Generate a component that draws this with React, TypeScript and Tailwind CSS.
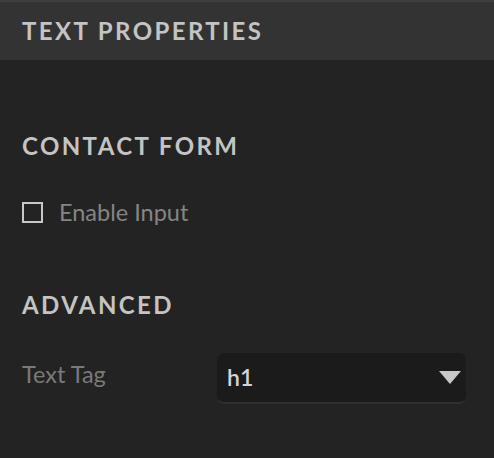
export default function App() {
  return (
    <div className="w-[494px] h-[458px] bg-[#232323] overflow-hidden" style={{ fontFamily: "Lato, 'Noto Sans', sans-serif" }}>
      <div className="h-[60px] bg-[#333333] border-t-2 border-[#3e3e3e] flex items-center px-[22px]">
        <h2 className="text-[24px] font-bold tracking-[0.1em] text-[#c4c4c4] leading-none">TEXT PROPERTIES</h2>
      </div>

      <div className="px-[22px]">
        <h3 className="mt-[74px] text-[24px] font-bold tracking-[0.1em] text-[#c4c4c4] leading-none">CONTACT FORM</h3>

        <label className="mt-[43px] flex items-center gap-4">
          <span className="w-[21px] h-[21px] border-2 border-[#c8c8c8]" />
          <span className="text-[23.5px] text-[#858585] leading-none">Enable Input</span>
        </label>

        <h3 className="mt-[68px] text-[24px] font-bold tracking-[0.1em] text-[#c4c4c4] leading-none">ADVANCED</h3>

        <div className="mt-[36px] flex items-center">
          <span className="w-[195px] mb-[6px] text-[23.5px] text-[#7a7a7a]">Text Tag</span>
          <div className="w-[249px] h-[51px] rounded-[7px] bg-[#1b1b1b] border-b-2 border-[#2f2f2f] flex items-center justify-between pl-[10px] pr-[5px]">
            <span className="text-[23px] font-semibold text-[#d4d4d4]">h1</span>
            <svg width="22" height="13" viewBox="0 0 22 13">
              <path d="M0 0H22L11 13Z" fill="#c8c8c8" />
            </svg>
          </div>
        </div>
      </div>
    </div>
  );
}
